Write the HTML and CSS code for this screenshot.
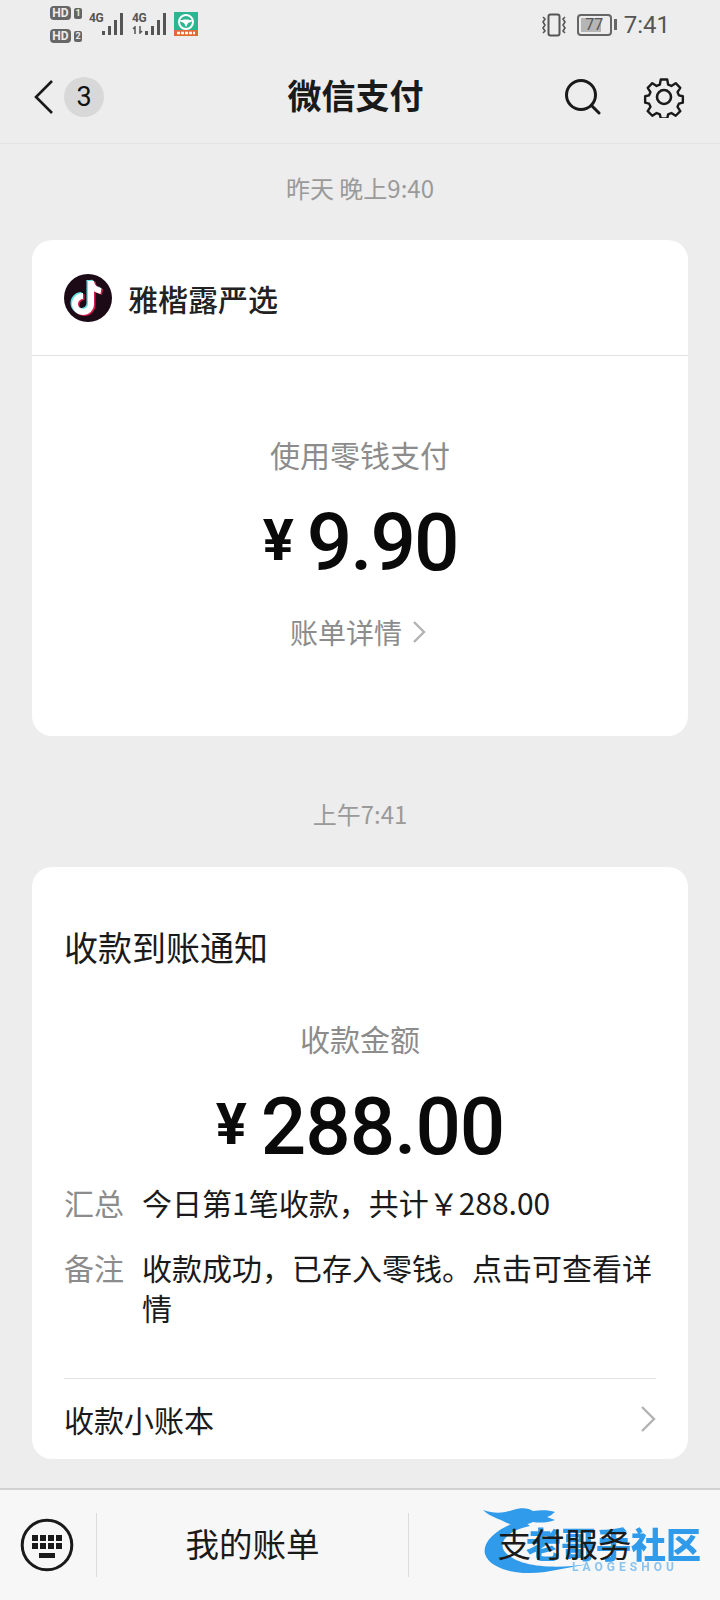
FILE: index.html
```html
<!DOCTYPE html>
<html lang="zh-CN">
<head>
    <meta charset="UTF-8">
    <meta name="viewport" content="width=device-width, initial-scale=1.0">
    <title>微信支付</title>
    <link rel="stylesheet" href="styles.css">
</head>
<body>
    <div class="status-bar">
        <div class="status-left">
            <div class="hd-col">
                <div class="hd-row"><span class="hd">HD</span><span class="hd-num">1</span></div>
                <div class="hd-row"><span class="hd">HD</span><span class="hd-num">2</span></div>
            </div>
            <div class="net">
                <span class="net-label">4G</span>
                <svg width="24" height="24" viewBox="0 0 24 24" fill="#555">
                    <rect x="1" y="19" width="3" height="4"/><rect x="7" y="14" width="3" height="9"/><rect x="13" y="8" width="3" height="15"/><rect x="19" y="1" width="3" height="22"/>
                </svg>
            </div>
            <div class="net">
                <span class="net-label">4G
                    <svg class="net-arrows" width="12" height="8" viewBox="0 0 12 8" fill="none" stroke="#555" stroke-width="1.500">
                        <path d="M3 8V1L1 3M8 0v7l2-2"/>
                    </svg>
                </span>
                <svg width="24" height="24" viewBox="0 0 24 24" fill="#555">
                    <rect x="1" y="19" width="3" height="4"/><rect x="7" y="14" width="3" height="9"/><rect x="13" y="8" width="3" height="15"/><rect x="19" y="1" width="3" height="22"/>
                </svg>
            </div>
            <svg class="app-icon" width="24" height="24" viewBox="0 0 24 24">
                <rect width="24" height="24" fill="#2db592"/>
                <rect y="18" width="24" height="6" fill="#e0683a"/>
                <circle cx="12" cy="10" r="7" fill="none" stroke="#fff" stroke-width="2"/>
                <path d="M5 9c4-2 10-2 14 0l-5 2-2 4-2-4z" fill="#fff"/>
                <path d="M3 21h18" stroke="#fff" stroke-width="2.500" stroke-dasharray="3 1"/>
            </svg>
        </div>
        <div class="status-right">
            <svg width="28" height="24" viewBox="0 0 28 24" fill="none" stroke="#555" stroke-width="2">
                <rect x="8.500" y="1.500" width="11" height="21" rx="2"/>
                <path d="M3 4l2 2-2 3 2 3-2 3 2 3-2 2M25 4l-2 2 2 3-2 3 2 3-2 3 2 2" stroke-width="1.600"/>
            </svg>
            <div class="battery"><div class="battery-fill"></div><span class="battery-num">77</span></div>
            <span class="battery-tip"></span>
            <span class="clock">7:41</span>
        </div>
    </div>

    <header class="top-bar">
        <div class="top-left">
            <svg width="22" height="36" viewBox="0 0 22 36" fill="none" stroke="#1a1a1a" stroke-width="2.600">
                <path d="M19 2L3 18l16 16"/>
            </svg>
            <span class="unread">3</span>
        </div>
        <h1 class="top-title">微信支付</h1>
        <div class="top-right">
            <svg width="36" height="36" viewBox="0 0 36 36" fill="none" stroke="#1a1a1a" stroke-width="3">
                <circle cx="16" cy="16" r="14.500"/>
                <path d="M26.500 26.500l7.500 7.500" stroke-linecap="round"/>
            </svg>
            <svg width="42" height="42" viewBox="0 0 42 42" fill="none" stroke="#1a1a1a" stroke-width="2.600" stroke-linejoin="round">
                <circle cx="21" cy="21" r="7"/>
                <path d="M17.500 2h7l1 5.500 3.500 1.500 4.700-3 5 5-3 4.700 1.500 3.500 4.300 1v7l-4.300 1-1.500 3.500 3 4.700-5 5-4.700-3-3.500 1.500-1 4.300h-7l-1-4.300-3.500-1.500-4.700 3-5-5 3-4.700-1.500-3.500-4.300-1v-7l4.300-1 1.500-3.500-3-4.700 5-5 4.700 3 3.500-1.500z" transform="translate(21 21) scale(.92) translate(-21 -21)"/>
            </svg>
        </div>
    </header>

    <main class="feed">
        <div class="stamp">昨天 晚上9:40</div>
        <section class="card card-pay">
            <div class="merchant">
                <svg class="merchant-logo" width="48" height="48" viewBox="0 0 48 48" fill="none" stroke-width="6">
                    <circle cx="24" cy="24" r="24" fill="#1c0a16"/>
                    <g stroke="#5fe3e6" transform="translate(-1.500 -1)">
                        <path d="M27 7v23a8 8 0 1 1-8-8"/>
                        <path d="M27 7c.5 5 4 9 10 10"/>
                    </g>
                    <g stroke="#d81b4f" transform="translate(1.500 1)">
                        <path d="M27 7v23a8 8 0 1 1-8-8"/>
                        <path d="M27 7c.5 5 4 9 10 10"/>
                    </g>
                    <g stroke="#fff">
                        <path d="M27 7v23a8 8 0 1 1-8-8"/>
                        <path d="M27 7c.5 5 4 9 10 10"/>
                    </g>
                </svg>
                <span class="merchant-name">雅楷露严选</span>
            </div>
            <div class="pay-body">
                <div class="amount-label">使用零钱支付</div>
                <div class="amount amount-pay"><span class="yen">¥</span>9.90</div>
                <div class="detail-link">账单详情
                    <svg width="14" height="24" viewBox="0 0 14 24" fill="none" stroke="#b2b2b2" stroke-width="2.400"><path d="M2 2l10 10L2 22"/></svg>
                </div>
            </div>
        </section>

        <div class="stamp stamp-small">上午7:41</div>
        <section class="card card-notice">
            <div class="notice-title">收款到账通知</div>
            <div class="amount-label amount-label-notice">收款金额</div>
            <div class="amount amount-notice"><span class="yen">¥</span>288.00</div>
            <div class="info-row">
                <span class="info-key">汇总</span>
                <span class="info-val">今日第1笔收款，共计￥288.00</span>
            </div>
            <div class="info-row info-row-note">
                <span class="info-key">备注</span>
                <span class="info-val">收款成功，已存入零钱。点击可查看详情</span>
            </div>
            <div class="ledger">
                <span>收款小账本</span>
                <svg width="16" height="28" viewBox="0 0 16 28" fill="none" stroke="#b2b2b2" stroke-width="2.400"><path d="M2 2l12 12L2 26"/></svg>
            </div>
        </section>
    </main>

    <footer class="tab-bar">
        <div class="tab-key">
            <svg width="54" height="54" viewBox="0 0 54 54">
                <circle cx="27" cy="27" r="24.800" fill="none" stroke="#1a1a1a" stroke-width="3"/>
                <g fill="#1a1a1a">
                    <rect x="12" y="17" width="6" height="6"/><rect x="20" y="17" width="6" height="6"/><rect x="28" y="17" width="6" height="6"/><rect x="36" y="17" width="6" height="6"/>
                    <rect x="12" y="25" width="6" height="6"/><rect x="20" y="25" width="6" height="6"/><rect x="28" y="25" width="6" height="6"/><rect x="36" y="25" width="6" height="6"/>
                    <rect x="19" y="35" width="16" height="5"/>
                </g>
            </svg>
        </div>
        <div class="tab-item">我的账单</div>
        <div class="tab-item">支付服务</div>
        <div class="watermark">
            <svg class="wm-swoosh" width="120" height="72" viewBox="0 0 120 72" fill="#2f9bea">
                <path d="M40 14C14 22 0 36 3 48c4 14 30 22 60 18l44-8c-32 5-70 4-84-12-8-10 4-22 25-26z"/>
                <path d="M1 4c12 4 20 3 30 0 8-3 16-2 20 1 8-1 16-1 22 1-3 2-4 4-8 5l8 3c-8 3-16 3-22 2-10 5-22 4-30-1C14 12 6 9 1 4z"/>
            </svg>
            <span class="wm-text">老哥手社区</span>
            <span class="wm-sub">LAOGESHOU</span>
        </div>
    </footer>
</body>
</html>
```

FILE: styles.css
```css
* {
    box-sizing: border-box;
}

html, body {
    margin: 0;
    padding: 0;
}

body {
    width: 720px;
    height: 1600px;
    overflow: hidden;
    display: flex;
    flex-direction: column;
    background-color: #ededed;
    color: #111;
    font-family: "Noto Sans CJK SC", "Noto Sans", sans-serif;
}

/* status bar */
.status-bar {
    height: 50px;
    padding: 4px 50px 0 50px;
    display: flex;
    justify-content: space-between;
    color: #555;
    flex-shrink: 0;
}

.status-left {
    display: flex;
    align-items: flex-start;
}

.hd-col {
    width: 39px;
    display: flex;
    flex-direction: column;
    gap: 9px;
    padding-top: 2px;
}

.hd-row {
    display: flex;
    align-items: center;
    gap: 3px;
    height: 14px;
}

.hd {
    width: 21px;
    height: 14px;
    border-radius: 4px;
    background-color: #666;
    color: #ededed;
    font: bold 12px/14px "Roboto", sans-serif;
    text-align: center;
}

.hd-num {
    width: 8px;
    height: 11px;
    border-radius: 2px;
    background-color: #666;
    color: #ededed;
    font: bold 9px/11px "Roboto", sans-serif;
    text-align: center;
}

.net {
    width: 43px;
    height: 24px;
    margin-top: 8px;
    display: flex;
    align-items: flex-end;
}

.net-label {
    width: 12px;
    align-self: flex-start;
    font: bold 12px/13px "Roboto", sans-serif;
    letter-spacing: -.5px;
}

.net-arrows {
    display: block;
    margin-top: 1px;
}

.app-icon {
    margin: 8px 0 0 -1px;
}

.status-right {
    display: flex;
    align-items: center;
    height: 41px;
}

.battery {
    position: relative;
    width: 35px;
    height: 22px;
    margin-left: 9px;
    border: 2px solid #666;
    border-radius: 4px;
    padding: 2px;
}

.battery-fill {
    width: 76%;
    height: 100%;
    background-color: #b5b5b5;
}

.battery-num {
    position: absolute;
    left: 0;
    right: 0;
    top: 0;
    text-align: center;
    font: 16px/18px "Roboto", sans-serif;
    color: #555;
}

.battery-tip {
    width: 3px;
    height: 11px;
    margin: 0 7px 0 2px;
    background-color: #666;
}

.clock {
    font: 24px/30px "Roboto", sans-serif;
}

/* title bar */
.top-bar {
    height: 94px;
    padding: 0 35px 0 33px;
    display: grid;
    grid-template-columns: 1fr auto 1fr;
    align-items: center;
    border-bottom: 1px solid #e3e3e3;
    flex-shrink: 0;
}

.top-left {
    display: flex;
    align-items: center;
    gap: 9px;
}

.unread {
    width: 40px;
    height: 40px;
    border-radius: 50%;
    background-color: #d8d8d8;
    text-align: center;
    font: 27px/40px "Roboto", sans-serif;
}

.top-title {
    margin: 0 7px 4px 0;
    font-size: 34px;
    font-weight: 700;
    line-height: 44px;
    color: #1a1a1a;
}

.top-right {
    display: flex;
    justify-content: flex-end;
    align-items: center;
    gap: 42px;
}

/* feed */
.feed {
    flex: 1;
    padding: 0 32px;
    min-height: 0;
}

.stamp {
    height: 96px;
    padding-top: 27px;
    text-align: center;
    font-size: 24px;
    line-height: 34px;
    color: #9a9a9a;
}

.stamp-small {
    height: 131px;
    padding-top: 61px;
}

.card {
    background-color: #fff;
    border-radius: 20px;
}

.card-pay {
    height: 496px;
}

.merchant {
    height: 116px;
    padding-left: 32px;
    display: flex;
    align-items: center;
    gap: 16px;
    border-bottom: 1px solid #e2e2e2;
}

.merchant-name {
    font-size: 30px;
    font-weight: 500;
    color: #222;
}

.pay-body {
    padding-top: 76px;
    text-align: center;
}

.amount-label {
    font-size: 30px;
    line-height: 44px;
    color: #8c8c8c;
}

.amount {
    font-family: "Roboto", sans-serif;
    font-size: 80px;
    font-weight: 500;
    line-height: 94px;
    letter-spacing: -1px;
    color: #0a0a0a;
}

.amount-pay {
    margin-top: 17px;
    letter-spacing: -2px;
}

.yen {
    margin-right: 15px;
    font-size: 58px;
    font-weight: 700;
    vertical-align: 10px;
}

.detail-link {
    margin-top: 22px;
    padding-right: 4px;
    display: flex;
    justify-content: center;
    align-items: center;
    gap: 10px;
    font-size: 28px;
    line-height: 40px;
    color: #8c8c8c;
}

.card-notice {
    height: 592px;
    padding: 55px 32px 0;
}

.notice-title {
    font-size: 34px;
    line-height: 50px;
    color: #1a1a1a;
}

.amount-label-notice {
    margin-top: 44px;
    text-align: center;
}

.amount-notice {
    margin-top: 27px;
    height: 74px;
    line-height: 74px;
    text-align: center;
}

.info-row {
    margin-top: 21px;
    display: flex;
    gap: 18px;
    font-size: 30px;
    line-height: 40px;
}

.info-row-note {
    margin-top: 25px;
}

.info-key {
    flex-shrink: 0;
    color: #8c8c8c;
}

.info-val {
    color: #1a1a1a;
}

.ledger {
    margin-top: 51px;
    height: 81px;
    display: flex;
    justify-content: space-between;
    align-items: center;
    border-top: 1px solid #e2e2e2;
    font-size: 30px;
    color: #1a1a1a;
}

/* bottom bar */
.tab-bar {
    position: relative;
    height: 112px;
    display: flex;
    align-items: center;
    border-top: 2px solid #d2d2d2;
    background-color: #f7f7f7;
    flex-shrink: 0;
}

.tab-key {
    width: 97px;
    height: 64px;
    display: flex;
    justify-content: center;
    align-items: center;
    padding-right: 3px;
    border-right: 1px solid #dcdcdc;
}

.tab-item {
    position: relative;
    z-index: 1;
    flex: 1;
    height: 64px;
    text-align: center;
    font-size: 33.500px;
    line-height: 60px;
    color: #1a1a1a;
}

.tab-item + .tab-item {
    border-left: 1px solid #dcdcdc;
}

/* site mark laid over the right tab */
.watermark {
    position: absolute;
    left: 482px;
    top: 16px;
    width: 230px;
    height: 76px;
    filter: blur(.7px);
}

.wm-swoosh {
    position: absolute;
    left: 0;
    top: 0;
}

.wm-text {
    position: absolute;
    left: 44px;
    top: 12px;
    font-size: 35px;
    font-weight: 900;
    line-height: 50px;
    white-space: nowrap;
    color: #2f9bea;
}

.wm-sub {
    position: absolute;
    left: 90px;
    top: 54px;
    font: bold 12px/14px "Roboto", sans-serif;
    letter-spacing: 4px;
    white-space: nowrap;
    color: #8cc4ee;
}
```
